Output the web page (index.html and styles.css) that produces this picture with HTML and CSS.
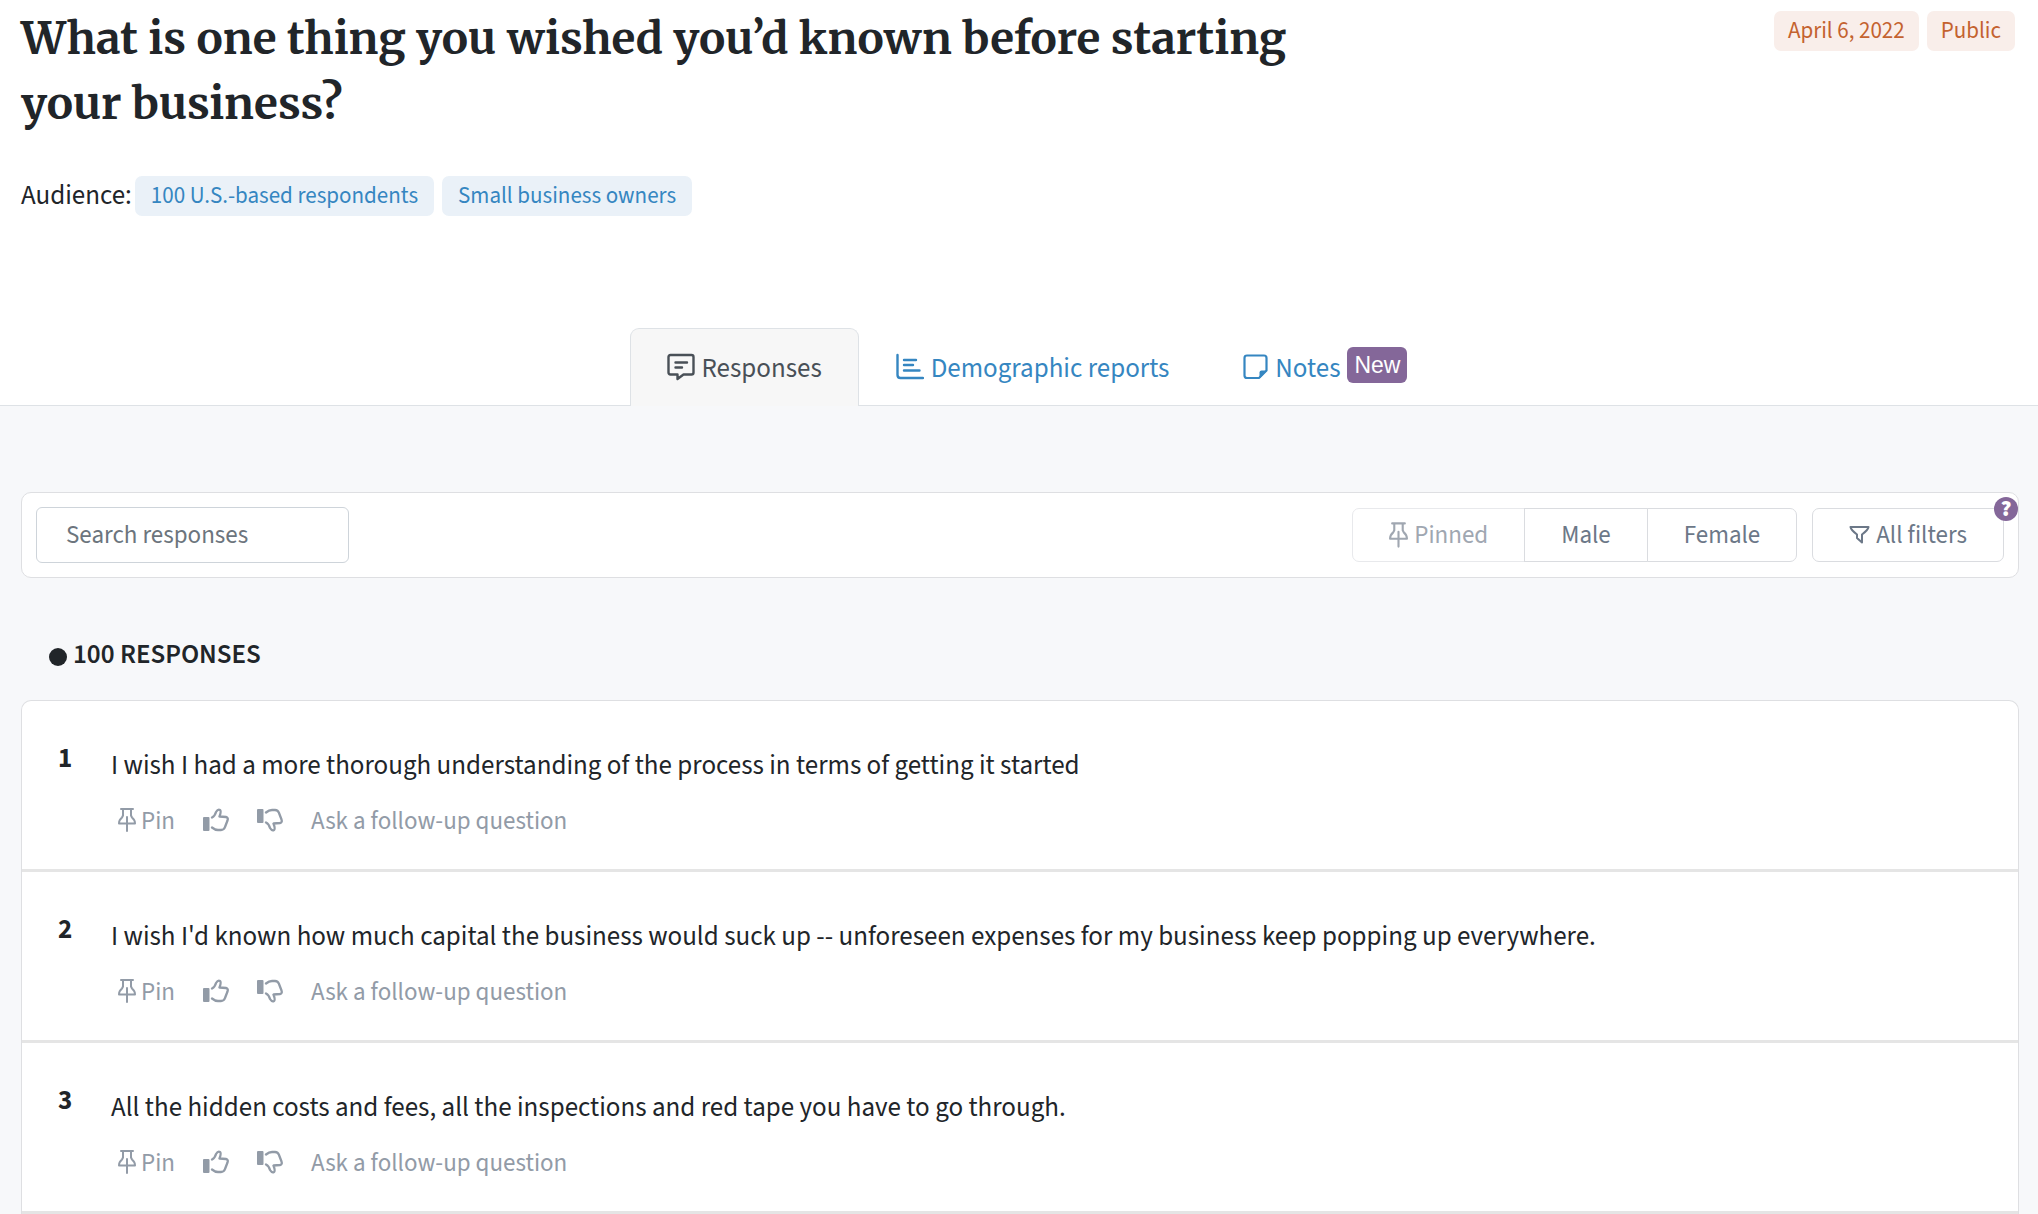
FILE: index.html
```html
<!DOCTYPE html>
<html lang="en">
<head>
<meta charset="utf-8">
<title>Survey responses</title>
<link rel="stylesheet" href="styles.css">
</head>
<body>
<svg class="sprite" aria-hidden="true">
  <symbol id="pin" viewBox="0 0 18 24"><path d="M3 1h12M5 1.5v6L4 9.500Q1 12 1 15.500H17Q17 12 14 9.500L13 7.500v-6M9 9V23"/></symbol>
  <symbol id="thumb" viewBox="0 0 26 24"><rect class="solid" x="0" y="9" width="6.500" height="14" rx="1"/><path stroke-width="2.3" d="M9 9.500Q12 8 13 4Q15 .8 17 2Q18.500 3 16.500 8.500L23 9Q25.500 9.500 24.500 12.500L22 19Q21 22 18 22H15Q12 22 9 19.500"/></symbol>
</svg>
<header class="survey-header">
  <div class="title-row">
    <h1>What is one thing you wished you’d known before starting your business?</h1>
    <div class="tags">
      <span class="tag tag-meta">April 6, 2022</span>
      <span class="tag tag-meta">Public</span>
    </div>
  </div>
  <div class="audience">
    <span class="audience-label">Audience:</span>
    <div class="tags">
      <span class="tag tag-audience">100 U.S.-based respondents</span>
      <span class="tag tag-audience">Small business owners</span>
    </div>
  </div>
</header>
<nav class="tabs">
  <a class="tab active" href="#responses">
    <svg class="icon" width="28" height="28" viewBox="0 0 28 28"><path stroke-width="2.4" d="M3.500 2H24.500Q26.500 2 26.500 4V19.500Q26.500 21.500 24.500 21.500H16.500L10.500 26V21.500H3.500Q1.500 21.500 1.500 19.500V4Q1.500 2 3.500 2ZM8.500 9.500H20M8.500 14.500H15"/></svg>
    Responses</a>
  <a class="tab" href="#reports">
    <svg class="icon" width="28" height="28" viewBox="0 0 28 28"><path stroke-width="2.4" d="M1.500 2V22Q1.500 25 4.500 25H27M8 7H20M8 12H17M8 17.500H23.500"/></svg>
    Demographic reports</a>
  <a class="tab" href="#notes">
    <svg class="icon" width="25" height="28" viewBox="0 0 25 28"><path stroke-width="2.2" d="M16 25H4Q1.500 25 1.500 22.500V5Q1.500 2.500 4 2.500H21Q23.500 2.500 23.500 5V17.500L16.500 24.500"/><path class="solid" d="M24 17.500H18.500Q16.500 17.500 16.500 19.500V25.500Z"/></svg>
    Notes<span class="new-badge">New</span></a>
</nav>
<main class="content">
  <form class="filters">
    <input class="search" type="text" placeholder="Search responses" aria-label="Search responses">
    <div class="filter-actions">
      <div class="btn-group">
        <button class="btn muted" type="button"><svg class="icon" width="19" height="26"><use href="#pin"/></svg>Pinned</button>
        <button class="btn" type="button">Male</button>
        <button class="btn" type="button">Female</button>
      </div>
      <div class="all-filters">
        <button class="btn" type="button"><svg class="icon" width="21" height="18" viewBox="0 0 21 18"><path d="M1.500 1H19.500Q19 4 13 8.500V16.500L8 12V8.500Q2 4 1.500 1Z"/></svg>All filters</button>
        <button class="help" type="button" aria-label="Help">?</button>
      </div>
    </div>
  </form>
  <h2 id="responses"><span class="dot"></span>100 RESPONSES</h2>
  <ol class="responses">
    <li class="response">
      <span class="number">1</span>
      <div class="body">
        <p>I wish I had a more thorough understanding of the process in terms of getting it started</p>
        <div class="actions">
          <button class="action pin" type="button"><svg class="icon" width="18" height="24"><use href="#pin"/></svg>Pin</button>
          <button class="action" type="button" aria-label="Like"><svg class="icon" width="26" height="24"><use href="#thumb"/></svg></button>
          <button class="action" type="button" aria-label="Dislike"><svg class="icon down" width="26" height="24"><use href="#thumb"/></svg></button>
          <button class="action" type="button">Ask a follow-up question</button>
        </div>
      </div>
    </li>
    <li class="response">
      <span class="number">2</span>
      <div class="body">
        <p>I wish I'd known how much capital the business would suck up -- unforeseen expenses for my business keep popping up everywhere.</p>
        <div class="actions">
          <button class="action pin" type="button"><svg class="icon" width="18" height="24"><use href="#pin"/></svg>Pin</button>
          <button class="action" type="button" aria-label="Like"><svg class="icon" width="26" height="24"><use href="#thumb"/></svg></button>
          <button class="action" type="button" aria-label="Dislike"><svg class="icon down" width="26" height="24"><use href="#thumb"/></svg></button>
          <button class="action" type="button">Ask a follow-up question</button>
        </div>
      </div>
    </li>
    <li class="response">
      <span class="number">3</span>
      <div class="body">
        <p>All the hidden costs and fees, all the inspections and red tape you have to go through.</p>
        <div class="actions">
          <button class="action pin" type="button"><svg class="icon" width="18" height="24"><use href="#pin"/></svg>Pin</button>
          <button class="action" type="button" aria-label="Like"><svg class="icon" width="26" height="24"><use href="#thumb"/></svg></button>
          <button class="action" type="button" aria-label="Dislike"><svg class="icon down" width="26" height="24"><use href="#thumb"/></svg></button>
          <button class="action" type="button">Ask a follow-up question</button>
        </div>
      </div>
    </li>
  </ol>
</main>
</body>
</html>
```
FILE: styles.css
```css
* {
  box-sizing: border-box;
}

body {
  margin: 0;
  background: #fff;
  color: #212529;
  font-family: "Source Sans 3", "Noto Sans CJK SC", sans-serif;
  font-size: 27px;
  line-height: 36px;
}

h1,
h2,
p,
ol {
  margin: 0;
  padding: 0;
}

button,
input {
  font: inherit;
  color: inherit;
}

.sprite {
  display: none;
}

.icon {
  flex: none;
  fill: none;
  stroke: currentColor;
  stroke-width: 2;
  stroke-linecap: round;
  stroke-linejoin: round;
}

.solid {
  fill: currentColor;
  stroke: none;
}

/* Header */

.survey-header {
  display: flex;
  flex-direction: column;
  gap: 40px;
  padding: 6px 23px 112px 21px;
}

.title-row {
  display: flex;
  justify-content: space-between;
  align-items: flex-start;
}

h1 {
  max-width: 1360px;
  font-family: Merriweather, "Liberation Serif", serif;
  font-size: 44px;
  font-weight: 700;
  line-height: 65px;
}

.tags {
  display: flex;
  gap: 8px;
}

.title-row .tags {
  padding-top: 5px;
}

.tag {
  padding: 0 14px 1px;
  border-radius: 7px;
  font-size: 23px;
  line-height: 39px;
  white-space: nowrap;
}

.tag-meta {
  background: #f9eeea;
  color: #c4622f;
}

.tag-audience {
  padding: 0 16px 1px;
  background: #eaf1f8;
  color: #3586c1;
}

.audience {
  display: flex;
  align-items: center;
  gap: 3px;
}

/* Tabs */

.tabs {
  display: flex;
  justify-content: center;
  border-bottom: 1px solid #dee2e6;
}

.tab {
  display: flex;
  align-items: center;
  gap: 7px;
  height: 77px;
  padding: 3px 36px 0;
  border: 1px solid transparent;
  border-bottom: 0;
  border-radius: 9px 9px 0 0;
  color: #3586c1;
  text-decoration: none;
}

.tab .icon {
  margin-bottom: 4px;
}

.action .icon {
  margin-bottom: 2px;
}

.tab:last-child {
  padding-right: 0;
}

.tab.active {
  height: 78px;
  margin-bottom: -1px;
  padding-bottom: 1px;
  border-color: #dee2e6;
  background: #f7f7f7;
  color: #495057;
}

.new-badge {
  margin-bottom: 7px;
  padding: 0 7px;
  border-radius: 6px;
  background: #846799;
  color: #fff;
  font-family: "Liberation Sans", Arial, sans-serif;
  font-size: 23px;
}

/* Filters */

.content {
  padding: 86px 19px 0 21px;
  background: #f7f8fa;
}

.filters {
  display: flex;
  justify-content: space-between;
  align-items: center;
  padding: 14px;
  border: 1px solid #dedfe2;
  border-radius: 10px;
  background: #fff;
  font-size: 25px;
}

.search {
  width: 313px;
  height: 56px;
  padding: 0 29px;
  border: 1px solid #ced4da;
  border-radius: 6px;
  background: #fff;
}

.search::placeholder {
  color: #6c757d;
  opacity: 1;
}

.filter-actions {
  display: flex;
  gap: 15px;
}

.btn-group {
  display: flex;
}

.btn {
  display: flex;
  align-items: center;
  gap: 6px;
  height: 54px;
  padding: 0 36px 1px;
  border: 1px solid #dadce0;
  border-radius: 7px;
  background: #fff;
  color: #6c7888;
}

.btn-group .btn + .btn {
  margin-left: -1px;
  border-top-left-radius: 0;
  border-bottom-left-radius: 0;
}

.btn-group .btn:not(:last-child) {
  border-top-right-radius: 0;
  border-bottom-right-radius: 0;
}

.btn.muted {
  border-color: #e8e9ec;
  color: #a0a7b1;
}

.all-filters {
  position: relative;
}

.help {
  position: absolute;
  top: -11px;
  right: -14px;
  width: 24px;
  height: 24px;
  padding: 0;
  border: 0;
  border-radius: 50%;
  background: #846799;
  color: #fff;
  font-size: 23px;
  font-weight: 900;
  line-height: 24px;
}

/* Responses */

h2 {
  display: flex;
  align-items: center;
  gap: 6px;
  padding: 59px 28px 27px;
  font-size: 27px;
  font-weight: 600;
}

.dot {
  width: 18px;
  height: 18px;
  margin-top: 4px;
  border-radius: 50%;
  background: currentColor;
}

.responses {
  border: 1px solid #dedfe2;
  border-bottom: 0;
  border-radius: 10px 10px 0 0;
  background: #fff;
  list-style: none;
}

.response {
  display: grid;
  grid-template-columns: 53px 1fr;
  padding: 40px 36px 30px;
  border-bottom: 3px solid #e5e5e5;
}

.number {
  font-weight: 700;
}

.body {
  display: flex;
  flex-direction: column;
  gap: 19px;
  padding-top: 7px;
}

.actions {
  display: flex;
  gap: 28px;
  padding-left: 7px;
}

.action {
  display: flex;
  align-items: center;
  gap: 5px;
  padding: 0;
  border: 0;
  background: none;
  color: #929ba7;
  font-size: 25px;
}

.down {
  transform: scaleY(-1);
}
```
